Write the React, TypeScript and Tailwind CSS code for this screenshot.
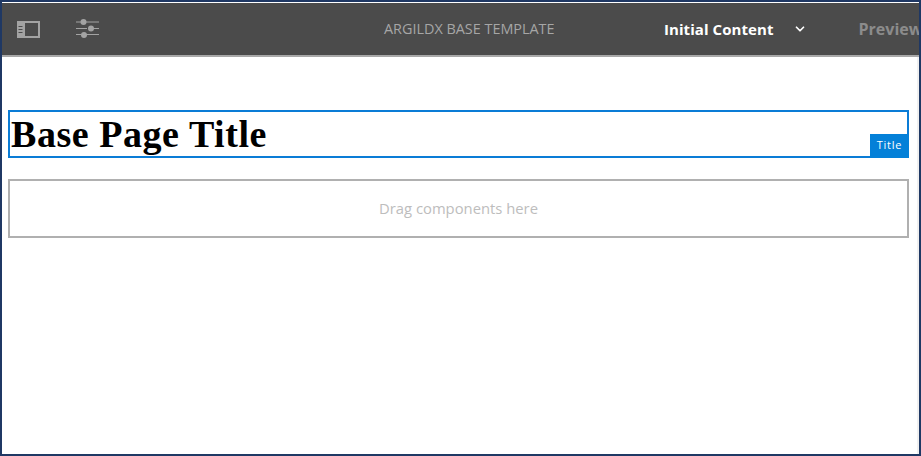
import React from 'react';
import { ChevronDown } from 'lucide-react';

const SidePanelIcon = () => (
    <svg width="23" height="17" viewBox="0 0 23 17">
        <rect x="1" y="1" width="21" height="15" fill="none" stroke="#a3a3a3" strokeWidth="2" />
        <rect x="1" y="1" width="7" height="15" fill="#a3a3a3" />
        <path d="M1.5 5.5h4M1.5 8.5h4M1.5 11.5h4" stroke="#4b4b4b" strokeWidth="1" />
    </svg>
);

const SlidersIcon = () => (
    <svg width="24" height="20" viewBox="0 0 24 20" fill="#a3a3a3">
        <path d="M0 3h5M10 3h13M0 9.5h11M16 9.5h7M0 15.5h5M10 15.5h13" stroke="#a3a3a3" strokeWidth="1" fill="none" />
        <circle cx="7.5" cy="3" r="3" />
        <circle cx="15" cy="9.5" r="3" />
        <circle cx="8" cy="16" r="3" />
    </svg>
);

function App() {
    return (
        <main className="w-[921px] h-[456px] overflow-hidden bg-white border-2 border-[#1f3864] flex flex-col font-['Open_Sans',sans-serif]">
            <header className="h-[54px] mt-px shrink-0 flex items-center overflow-hidden bg-[#4b4b4b] border-b-2 border-[#a8a8a8] text-[15px]">
                <div className="ml-[15px] shrink-0 flex items-center gap-[36px] w-[95px]">
                    <SidePanelIcon />
                    <SlidersIcon />
                </div>
                <div className="ml-[272px] shrink-0 w-[280px] text-[14.4px] text-[#a6a6a6] whitespace-nowrap">ARGILDX BASE TEMPLATE</div>
                <div className="flex shrink-0 items-center whitespace-nowrap">
                    <span className="font-bold text-white tracking-[0.07px]">Initial Content</span>
                    <ChevronDown className="ml-[19px] text-white" size={14} strokeWidth={3} />
                    <span className="ml-[52px] font-bold text-[16px] text-[#8c8c8c]">Preview</span>
                </div>
            </header>
            <div className="flex-1 pl-[6px] pr-[8px] pt-[53px] border-r-2 border-[#f0f0f0]">
                <div className="relative h-[48px] border-2 border-[#0a7cd6]">
                    <h1 className="pl-px font-['Liberation_Serif',serif] font-bold text-[38px] leading-[44px] tracking-[0.55px] text-black">Base Page Title</h1>
                    <span className="absolute right-[-2px] bottom-[-2px] w-[39px] h-[24px] pb-px bg-[#0480d8] text-white text-[11px] tracking-[0.8px] flex items-center justify-center">Title</span>
                </div>
                <div className="mt-[21px] h-[59px] border-2 border-[#b0b0b0] flex items-center justify-center text-[14.8px] text-[#bdbdbd]">
                    Drag components here
                </div>
            </div>
        </main>
    );
}

export default App;
